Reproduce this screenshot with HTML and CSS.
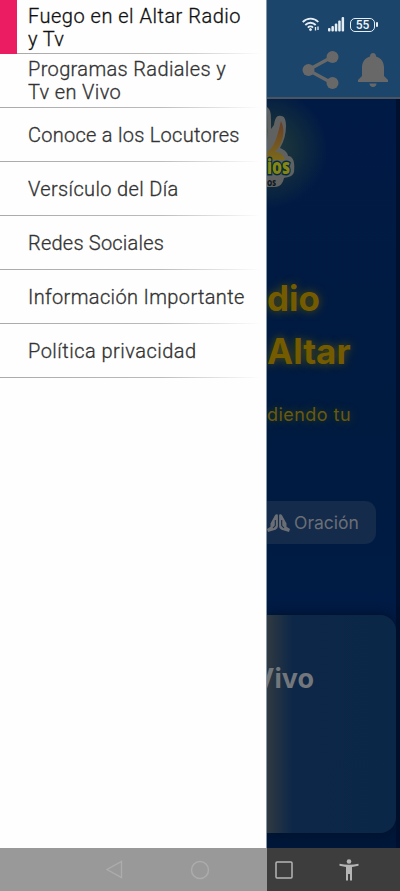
FILE: index.html
```html
<!DOCTYPE html>
<html lang="es">
<head>
<meta charset="utf-8">
<title>Fuego en el Altar Radio y Tv</title>
<link rel="stylesheet" href="styles.css">
</head>
<body>
<div class="screen">
  <nav class="drawer">
    <a class="item active"><span class="l1">Fuego en el Altar Radio</span><span>y Tv</span></a>
    <a class="item second"><span>Programas Radiales y</span><span>Tv en Vivo</span></a>
    <a class="item"><span class="l3">Conoce a los Locutores</span></a>
    <a class="item"><span>Versículo del Día</span></a>
    <a class="item"><span class="l5">Redes Sociales</span></a>
    <a class="item"><span>Información Importante</span></a>
    <a class="item"><span class="l7">Política privacidad</span></a>
  </nav>
  <main class="page">
    <header class="header">
      <div class="status">
        <svg width="18" height="15" viewBox="0 0 18 15" fill="none" stroke="#e6eef5" stroke-width="1.8"><path d="M.7 5C5.3.5 12 .5 16.3 5M3.3 8c3-3 7.400-3 10.400 0M5.800 10.600c1.600-1.600 3.700-1.600 5.200 0"/><circle cx="8.500" cy="12.600" r="1" fill="#e6eef5" stroke-width="1"/><path d="M13.500 10v3.500M16 9.500V13" stroke-width="1.300"/></svg>
        <svg width="17" height="15" viewBox="0 0 17 15" fill="#e6eef5"><rect x="0" y="11" width="2.500" height="3.500" rx="1"/><rect x="3.400" y="9" width="2.500" height="5.500" rx="1"/><rect x="6.800" y="6.500" width="2.500" height="8" rx="1"/><rect x="10.200" y="3.500" width="2.500" height="11" rx="1"/><rect x="13.600" y="0" width="2.500" height="14.500" rx="1"/></svg>
        <span class="battery">55</span>
      </div>
      <div class="actions">
        <svg width="37" height="40" viewBox="0 0 37 40" fill="#686868"><path d="M30 7 6 20l24 13" fill="none" stroke="#686868" stroke-width="3.300"/><circle cx="6.500" cy="20" r="6"/><circle cx="30.500" cy="7" r="6"/><circle cx="30.500" cy="33" r="6"/></svg>
        <svg width="30" height="34" viewBox="0 0 30 34" fill="#686868"><path d="M15 0c2 0 3 1.500 3 3.500 5.500 1.500 8 6 8 11V23l4 4v2H0v-2l4-4v-8.500c0-5 2.500-9.500 8-11C12 1.500 13 0 15 0ZM11.500 30.500h7c0 2-1.500 3.500-3.500 3.500s-3.500-1.500-3.500-3.500Z"/></svg>
      </div>
    </header>
    <div class="body">
      <section class="hero">
        <svg class="logo" width="129" height="110" viewBox="0 0 129 110">
          <defs><linearGradient id="flame" x1="0" y1="0" x2="0" y2="1"><stop offset="0" stop-color="#683c28"/><stop offset="1" stop-color="#7b681b"/></linearGradient></defs>
          <path d="M0 8c4 3 4 8 4 13v9l3-4c1-7 3-10 7-9 4 0 5 5 5 10 0 8-2 15-6 22 5 2 8 5 8 8 6 0 7 8 6 16-1 4-5 5-10 6-1 5-4 9-9 9H0Z" fill="#606262"/>
          <path d="M0 14c1 7 0 13 1 18l-1 10Z" fill="#51513b"/>
          <path d="M14 22c5 10 2 23-6 31 6 0 9 4 10 8H0V53c9-6 11-20 14-31Z" fill="url(#flame)"/>
          <text class="logo-name" x="0" y="75" textLength="23" lengthAdjust="spacingAndGlyphs">ios</text>
          <text class="logo-sub" x="0" y="87" textLength="9" lengthAdjust="spacingAndGlyphs">OS</text>
        </svg>
        <h1>dio<br>Altar</h1>
        <p>diendo tu</p>
        <div class="button">
          <svg width="23" height="18" viewBox="0 0 23 18" fill="#6b6f75"><path d="M10.900 1.500v10.500c0 2-1 3-2.500 3.700L1 18l-1-3 3.500-2.200V9.500L8 1.200c1-1.500 2.900-1.200 2.900.3ZM12.100 1.500v10.500c0 2 1 3 2.500 3.700L22 18l1-3-3.500-2.200V9.500L15 1.200c-1-1.500-2.900-1.200-2.900.3Z"/><path d="M8.300 6v5.500L6 14M14.700 6v5.500L17 14" fill="none" stroke="#142b4b" stroke-width="1.100"/></svg>
          <span>Oración</span>
        </div>
      </section>
      <section class="card"><h2>Vivo</h2></section>
    </div>
  </main>
  <footer class="navbar">
    <svg width="17" height="20" viewBox="0 0 17 20" fill="none" stroke="#acacac" stroke-width="1.400"><path d="M15.500 1.500v16L1 9.500Z"/></svg>
    <svg width="20" height="20" viewBox="0 0 20 20" fill="none" stroke="#acacac" stroke-width="1.500"><circle cx="10" cy="10" r="8.500"/></svg>
    <svg width="18" height="18" viewBox="0 0 18 18" fill="none" stroke="#b5b5b5" stroke-width="1.500"><rect x="1" y="1" width="16" height="16" rx="1"/></svg>
    <svg width="20" height="22" viewBox="0 0 20 22" fill="#b5b5b5"><circle cx="10" cy="2.500" r="2.300"/><path d="M.5 4.700C6.500 6.200 13.500 6.200 19.500 4.700V6.800L13 8v13.500h-2V15H9v6.500H7V8L.5 6.800Z"/></svg>
  </footer>
</div>
</body>
</html>
```
FILE: styles.css
```css
* { box-sizing: border-box; }
body { margin: 0; font-family: Roboto, sans-serif; }
.screen { position: relative; display: flex; width: 400px; height: 891px; overflow: hidden; background: #001b42; }

.drawer { width: 267px; background: #fefefe; border-right: 1px solid #8796a4; }
.item {
  display: flex; flex-direction: column; justify-content: center;
  height: 54px; padding-left: 28px;
  font-size: 20px; font-weight: 300; line-height: 23px; letter-spacing: .36px; white-space: nowrap; color: #333;
  -webkit-text-stroke: .3px #333;
  background: linear-gradient(90deg, #aaa 0%, #bbb 60%, #fefefe 98%) bottom / 100% 1px no-repeat;
}
.item span { align-self: flex-start; }
.active {
  padding-left: 11px; padding-top: 1px; border-left: 17px solid #ec1c62;
  color: #111; -webkit-text-stroke-color: #111;
}
.l1 { letter-spacing: .5px; }
.l3 { letter-spacing: .27px; }
.l5 { letter-spacing: .22px; }
.l7 { letter-spacing: .48px; }

.page { display: flex; flex-direction: column; width: 133px; overflow: hidden; }
.header { height: 99px; padding-top: 17px; background: #1b456a; border-bottom: 2px solid #4b5561; }
.status { display: flex; align-items: center; height: 15px; padding-left: 35px; gap: 8px; }
.battery {
  position: relative; width: 25px; height: 14px; margin-left: -3px;
  border: 1.500px solid #e6eef5; border-radius: 5px;
  font-size: 12px; font-weight: 500; line-height: 12px; text-align: center; color: #f2f6fa;
}
.battery::after { content: ""; position: absolute; right: -4px; top: 3px; width: 2px; height: 5px; border-radius: 1px; background: #e6eef5; }
.actions { display: flex; align-items: center; height: 40px; margin-top: 18px; padding-left: 35px; gap: 19px; }

.body { flex: 1; border-right: 4px solid #00102e; background: linear-gradient(180deg, #001a46, #001b40 40%, #001b47 75%, #001635); }
.hero { display: flex; flex-direction: column; height: 516px; font-family: Inter, sans-serif; }
.logo { display: block; background: radial-gradient(circle 60px at 0 50px, #263d3a 0, #132d3d 50%, transparent 100%); }
.logo-name { font: 900 21px "Open Sans", sans-serif; fill: #858612; stroke: #082b3c; stroke-width: 3px; paint-order: stroke; }
.logo-sub { font: 900 9px "Open Sans", sans-serif; fill: #101820; }
h1 { margin: 63px 0 0; font-size: 35px; line-height: 53px; font-weight: 700; color: #755b00; text-shadow: 0 0 10px #54500a; white-space: nowrap; }
.hero p { margin: 23px 0 0; font-size: 18px; line-height: 27px; letter-spacing: .45px; color: #695a0c; text-shadow: 0 0 8px #39400f; white-space: nowrap; }
.button {
  display: flex; align-items: center; gap: 4px; width: 109px; height: 43px; margin-top: 73px;
  border-radius: 0 11px 11px 0; background: #142b4b; font-size: 17.500px; color: #6b6f75;
}
.card {
  display: flex; justify-content: flex-end; height: 218px; padding: 47px 82px 0 0; overflow: hidden;
  border-radius: 0 16px 16px 0; background: linear-gradient(90deg, #303940, #0c2748 26px, #0b2748);
  box-shadow: 0 0 12px #001027;
}
h2 { margin: 0; font: 700 27px/34px Inter, sans-serif; color: #73777b; }

.navbar {
  position: absolute; left: 0; right: 0; bottom: 0; height: 43px;
  display: flex; align-items: center; padding-left: 106px;
  background: linear-gradient(90deg, #999 267px, #3d3d3d 267px);
}
.navbar svg:nth-child(2) { margin-left: 67px; }
.navbar svg:nth-child(3) { margin-left: 65px; }
.navbar svg:nth-child(4) { margin-left: 46px; }
```
